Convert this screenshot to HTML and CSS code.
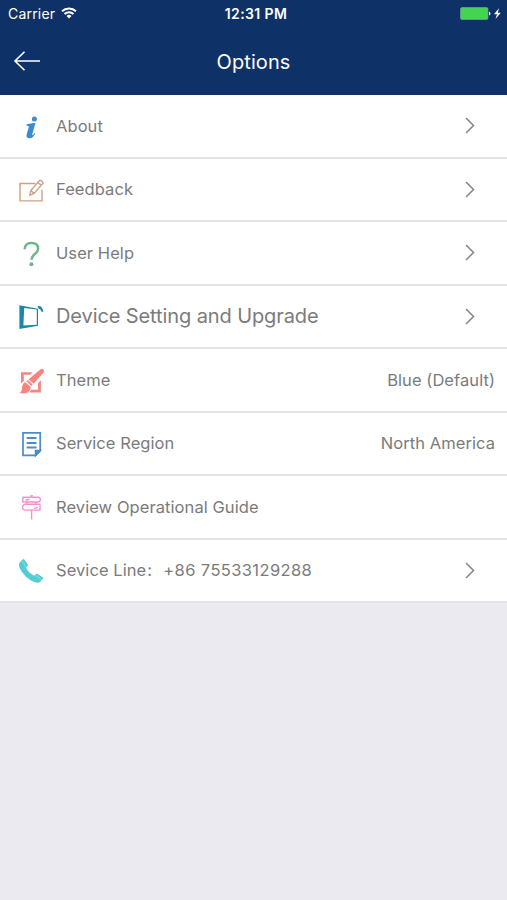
FILE: index.html
```html
<!DOCTYPE html>
<html lang="en">
<head>
    <meta charset="UTF-8">
    <meta name="viewport" content="width=device-width, initial-scale=1.0">
    <title>Options</title>
    <link rel="stylesheet" href="styles.css">
</head>
<body>

    <header class="header">
        <!-- Status bar -->
        <div class="status-bar">
            <div class="carrier">
                <span>Carrier</span>
                <svg width="16" height="12" viewBox="0 0 16 12" fill="none" stroke="#fff" stroke-width="1.9">
                    <path d="M1 4.3a10.2 10.2 0 0 1 14 0M3.5 7a6.6 6.6 0 0 1 9 0"/>
                    <path d="M8 11.4L5.5 8.9a3.7 3.7 0 0 1 5 0z" fill="#fff" stroke="none"/>
                </svg>
            </div>
            <div class="time">12:31 PM</div>
            <div class="battery">
                <svg width="42" height="14" viewBox="0 0 42 14">
                    <rect x="0.5" y="0.5" width="27.5" height="12" rx="1.5" fill="#43d551" stroke="#6f9f9b" stroke-width="0.7"/>
                    <path d="M29 4.4q3 2.1 0 4.2z" fill="#fff"/>
                    <path d="M39 1.3L34 7.2h3l-1.5 4.9 5.3-6.4h-3z" fill="#fff"/>
                </svg>
            </div>
        </div>

        <!-- Title bar -->
        <div class="nav-bar">
            <svg class="back" width="28" height="22" viewBox="0 0 28 22" fill="none" stroke="#fff" stroke-width="1.6">
                <path d="M12.5 0.8L3 10l9.5 9.2M3 10h25"/>
            </svg>
            <h1 class="title">Options</h1>
        </div>
    </header>

    <ul class="options">
        <li class="row">
            <svg class="icon" viewBox="0 0 26 26">
                <circle cx="16.4" cy="5.9" r="2.5" fill="#3a8bd0"/>
                <path d="M8.6 11.3l7.4-1.3h1.5l-3.1 10.7q-.5 1.9.3 1.5.8-.4 1.8-2l.8.5q-2.6 4.5-5.7 4.5-3.9 0-2.9-3.9l2-6.9q.4-1.6-.9-1.6H8.6z" fill="#3a8bd0"/>
            </svg>
            <span class="label">About</span>
            <svg class="chevron" viewBox="0 0 10 17"><path d="M1 1l7.5 7.5L1 16"/></svg>
        </li>
        <li class="row">
            <svg class="icon" viewBox="0 0 26 26" fill="none" stroke="#d0a182" stroke-width="1.4">
                <path d="M17.5 7.5H2v17.4h22V13.8M1 9.5h1"/>
                <path d="M11.8 19.4l1-4.8 8.5-9.9q.8-.8 1.6-.2l1.7 1.4q.9.8.1 1.7l-8.6 9.8zM19.8 6.5l3.3 2.8M12.8 14.6l3.3 2.8"/>
            </svg>
            <span class="label">Feedback</span>
            <svg class="chevron" viewBox="0 0 10 17"><path d="M1 1l7.5 7.5L1 16"/></svg>
        </li>
        <li class="row">
            <svg class="icon" viewBox="0 0 26 26">
                <path d="M6.7 9.2q0-6.1 6.7-6.1 6.7 0 6.7 5.6 0 2.6-3 5.1-3.5 2.7-3.6 6" fill="none" stroke="#6fb48b" stroke-width="2.5"/>
                <circle cx="13.4" cy="24.3" r="2" fill="#6fb48b"/>
            </svg>
            <span class="label">User Help</span>
            <svg class="chevron" viewBox="0 0 10 17"><path d="M1 1l7.5 7.5L1 16"/></svg>
        </li>
        <li class="row">
            <svg class="icon" viewBox="0 0 26 26">
                <path d="M1.4 2.2L20 5.7v17L1.4 26zM6.2 5.1L5.4 22.5l13.4-.7V6.5z" fill="#1b86a8" fill-rule="evenodd"/>
                <path d="M19.4 3.3q4.7-1.3 6 5.7l-2-.5q-.7-2.2-2.8-2.9z" fill="#1b86a8"/>
            </svg>
            <span class="label label-large">Device Setting and Upgrade</span>
            <svg class="chevron" viewBox="0 0 10 17"><path d="M1 1l7.5 7.5L1 16"/></svg>
        </li>
        <li class="row">
            <svg class="icon" viewBox="0 0 26 26" fill="#f8837f">
                <path d="M3 5.2h11.3l-2.1 2.5H5.8v6.3L3 16.4zM22.9 13.2v12.2H11.5l1.7-2.7h6.9v-6.6z"/>
                <path d="M22.3 2.4q1.9-1.4 3.2.2 1.2 1.4-.1 3.2L15.6 16.8l-5.1-4.6z"/>
                <path d="M9.8 13.1l4.8 4.5-1.2 1.4-4.9-4.4z"/>
                <path d="M7.3 15.3l5.3 4.5q.3 3.8-2.6 5.4-3.3 1.8-8.2.9 2.2-1.5 2.1-4.7.1-4.8 3.4-6.1z"/>
            </svg>
            <span class="label">Theme</span>
            <span class="value">Blue (Default)</span>
        </li>
        <li class="row">
            <svg class="icon" viewBox="0 0 26 26" fill="none" stroke="#4b8dc6" stroke-width="1.7">
                <path d="M5 2.8h17.2v17.8l-4.6 4.8H5z"/>
                <path d="M22.2 20.6h-4.6v4.8z" fill="#4b8dc6"/>
                <path d="M9.5 8.1h8.3M9.5 13.1h8.3M9.5 17.5h8.3" stroke-width="2" stroke-linecap="round"/>
            </svg>
            <span class="label">Service Region</span>
            <span class="value">North America</span>
        </li>
        <li class="row">
            <svg class="icon" viewBox="0 0 26 26" fill="none" stroke="#f590d0" stroke-width="1.4">
                <path d="M12.4 1.6h2.4M13.6 1.6v1.5M4.9 3.2h15q2.5.4 2.5 2.4T20 8H4.9z"/>
                <path d="M7 10.2h15v5.9H7q-2.6-.6-2.6-2.9 0-2.2 2.6-3zM9 8v2M17.8 8v2"/>
                <path d="M7.5 6.2l4-1M13.6 16.1v9.5M16 14.6l4-1.2"/>
            </svg>
            <span class="label">Review Operational Guide</span>
        </li>
        <li class="row">
            <svg class="icon" viewBox="0 0 26 26" fill="#52ccd5">
                <path d="M1.6 5.4L4.9 2.2q.8-.5 1.4.3l3.5 5q.5.9-.2 1.6L8 10.6q1.2 2.7 3.5 5 2.2 2.1 4.6 3.2l1.9-1.8q.8-.6 1.6-.1l5.1 3.3q.9.7.2 1.6l-2.8 3.2q-2.6 2-8.7-1.2-5.8-3.2-9.6-9Q-.5 8.4 1.6 5.4z"/>
                <path d="M3.7 3.8l4.2 5.9M17.2 18.1l6 4.2" fill="none" stroke="#a2e5e9" stroke-width="0.7"/>
            </svg>
            <span class="label">Sevice Line<span class="colon">:</span><span class="phone">+86 75533129288</span></span>
            <svg class="chevron" viewBox="0 0 10 17"><path d="M1 1l7.5 7.5L1 16"/></svg>
        </li>
    </ul>

</body>
</html>
```
FILE: styles.css
```css
* {
    box-sizing: border-box;
}
body {
    margin: 0;
    background-color: #ebeaf0;
    color: #7b7b7b;
    font-family: Inter, "Liberation Sans", sans-serif;
    font-size: 16.5px;
    letter-spacing: 0.07px;
}
.header {
    height: 95px;
    background-color: #0e3267;
    color: white;
}
.status-bar {
    display: grid;
    grid-template-columns: 1fr auto 1fr;
    align-items: center;
    height: 27px;
    padding: 0 5px 0 8px;
    font-size: 14px;
}
.carrier {
    display: flex;
    align-items: center;
    gap: 6px;
    letter-spacing: 0.2px;
}
.carrier svg {
    margin-bottom: 2px;
}
.time {
    padding-left: 2px;
    font-size: 14px;
    font-weight: 600;
    letter-spacing: 0.4px;
}
.battery {
    display: flex;
    justify-content: flex-end;
}
.nav-bar {
    display: grid;
    grid-template-columns: 28px 1fr 28px;
    align-items: center;
    height: 69px;
    padding: 0 12px;
}
.title {
    margin: 0;
    font-size: 20px;
    font-weight: 400;
    text-align: center;
}
.options {
    margin: 0;
    padding: 0;
    list-style: none;
}
.row {
    display: flex;
    align-items: center;
    height: 63.5px;
    padding: 0 12px 0 18px;
    background-color: white;
    border-bottom: 2px solid #e3e3e5;
}
.icon {
    flex: none;
    width: 26px;
    height: 26px;
    margin-right: 12px;
    overflow: visible;
}
.label {
    flex: 1;
    white-space: nowrap;
}
.label-large {
    font-size: 20px;
    letter-spacing: -0.1px;
}
.colon {
    display: inline-block;
    width: 17px;
    padding-left: 1px;
}
.phone {
    letter-spacing: 0.38px;
}
.chevron {
    width: 10px;
    height: 17px;
    margin-right: 20px;
    fill: none;
    stroke: #858585;
    stroke-width: 1.5;
}
```
